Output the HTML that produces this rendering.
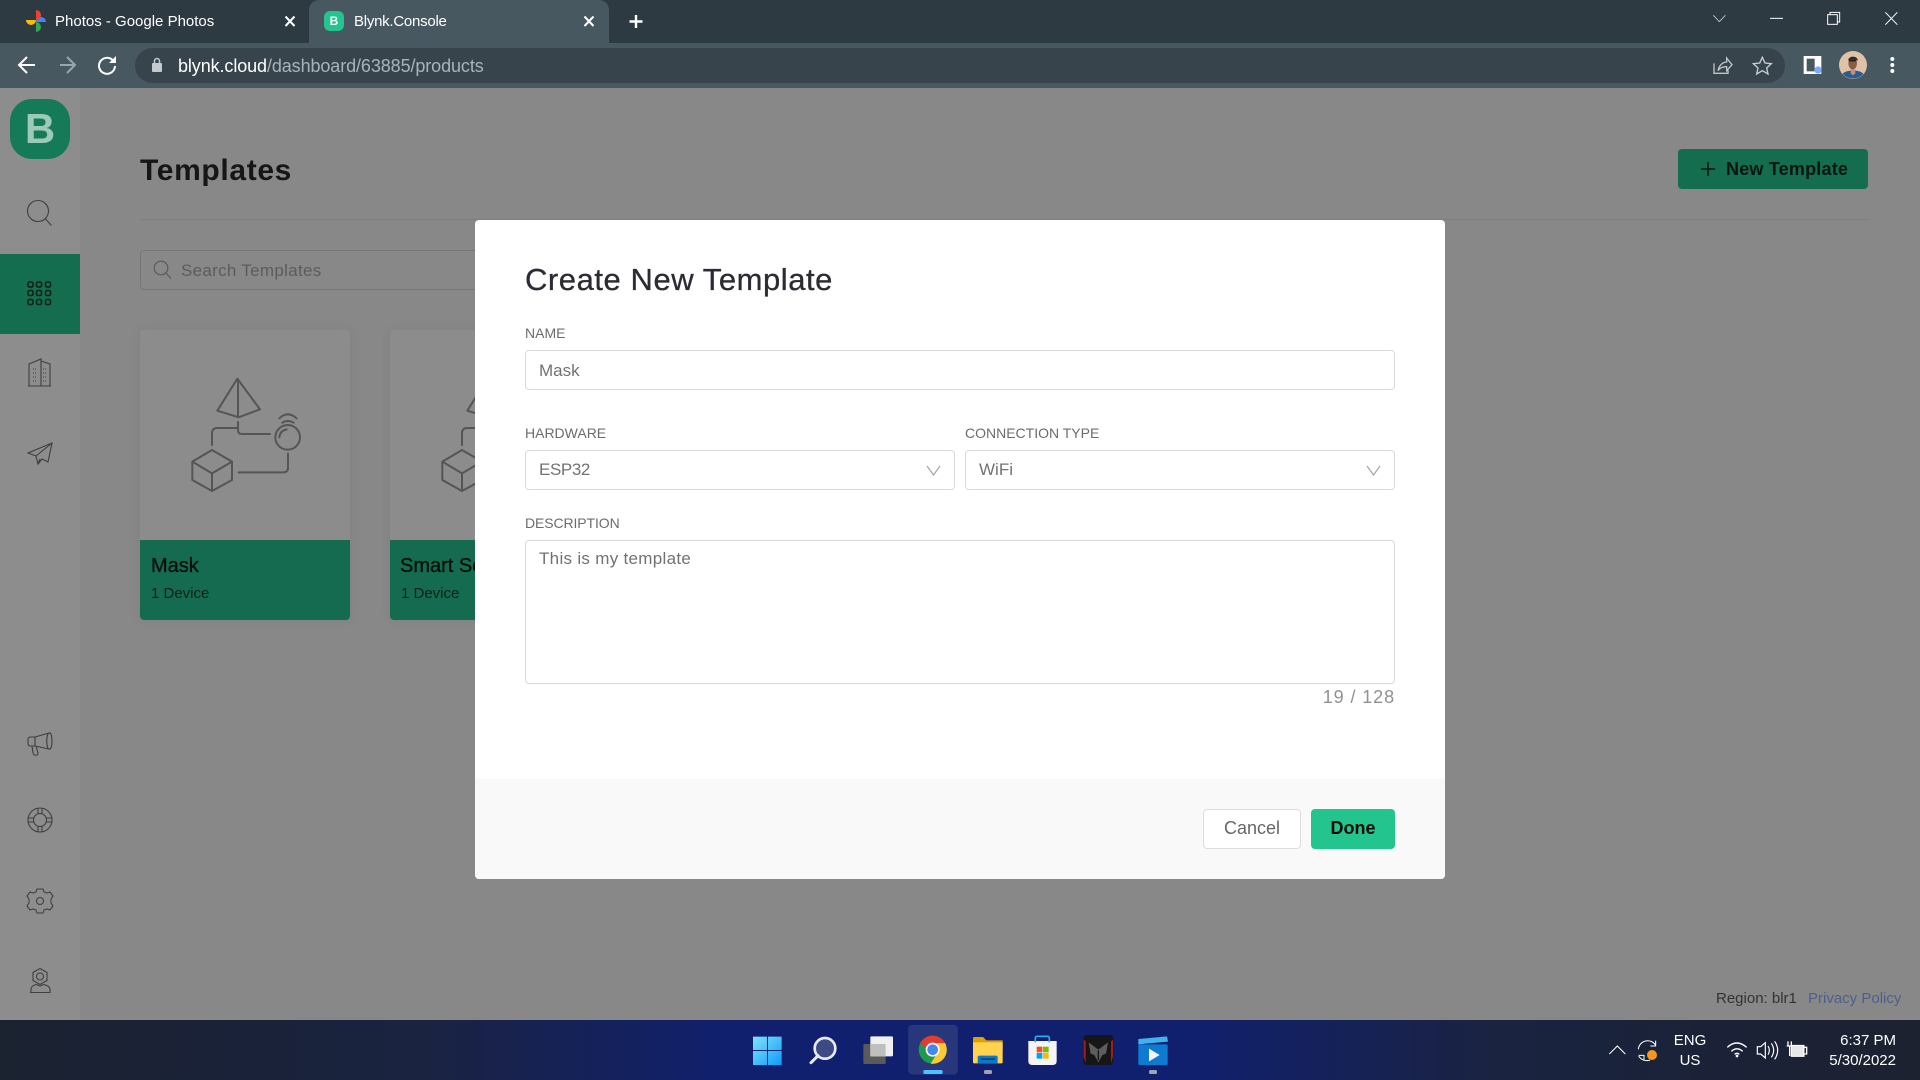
<!DOCTYPE html>
<html><head><meta charset="utf-8"><title>Blynk.Console</title>
<style>
*{box-sizing:border-box}
html,body{margin:0;padding:0;width:1920px;height:1080px;overflow:hidden;background:#888;font-family:"Liberation Sans",sans-serif}
.a{position:absolute;white-space:nowrap}
.lbl{font-size:14px;color:#6c6c6c;line-height:16px}
.inp{position:absolute;background:#fff;border:1px solid #d9d9d9;border-radius:4px}
.val{font-size:17px;color:#727272;line-height:20px}
svg{position:absolute;overflow:visible}
</style></head><body>
<!-- tab strip -->
<div class="a" style="left:0;top:0;width:1920px;height:43px;background:#2e3a42"></div>
<div class="a" style="left:0;top:43px;width:1920px;height:45px;background:#475861"></div>
<div class="a" style="left:309px;top:0;width:300px;height:43px;background:#475861;border-radius:10px 10px 0 0"></div>
<svg style="left:0;top:0" width="700" height="88" viewBox="0 0 700 88">
<path d="M36 22a5 5 0 0 1 10 0z" fill="#4285f4"/>
<path d="M36 20a5 5 0 0 1-10 0z" fill="#fbbc04"/>
<path d="M36 22a5 5 0 0 1 0 10z" fill="#34a853"/>
<path d="M36 20a5 5 0 0 0 0-10z" fill="#ea4335"/>
<path d="M285.500 16.500l9 9.500M294.500 16.500l-9 9.500M584.500 16.500l9 9.500M593.500 16.500l-9 9.500" stroke="#fff" stroke-width="2" fill="none"/>
<path d="M636 15v13M629.500 21.500h13" stroke="#fff" stroke-width="2.400"/>
<rect x="324" y="11" width="20" height="20" rx="6" fill="#23c48e"/>
<path d="M27 57l-8 8 8 8M19 65h16" stroke="#fff" stroke-width="2" fill="none"/>
<path d="M67 57l8 8-8 8M60 65h15" stroke="#9aa6ad" stroke-width="2" fill="none"/>
<g transform="translate(0 4)"><path d="M115 62a8 8 0 1 1-2-5.500" stroke="#fff" stroke-width="2" fill="none"/><path d="M116 52v7h-7z" fill="#fff"/></g>
</svg>
<div class="a" style="left:55px;top:13px;font-size:15px;line-height:18px;color:#fff">Photos - Google Photos</div>
<div class="a" style="left:354px;top:13px;font-size:15px;line-height:18px;color:#fff;letter-spacing:-.25px">Blynk.Console</div>
<div class="a" style="left:324px;top:11px;width:20px;text-align:center;font-size:12px;font-weight:bold;line-height:20px;color:#fff">B</div>
<div class="a" style="left:135px;top:48px;width:1650px;height:35px;background:#37444c;border-radius:18px"></div>
<svg style="left:151px;top:57px" width="12" height="16" viewBox="0 0 12 16"><rect x="1" y="6" width="10" height="9" rx="1" fill="#c4cacd"/><path d="M3.500 6V4a2.500 2.500 0 0 1 5 0v2" stroke="#c4cacd" stroke-width="1.500" fill="none"/></svg>
<div class="a" style="left:178px;top:55px;font-size:18px;line-height:22px;color:#fff;letter-spacing:-.1px">blynk.cloud<span style="color:#a9b3b8">/dashboard/63885/products</span></div>
<svg style="left:1600px;top:0" width="320" height="88" viewBox="0 0 960 264">
<path d="M340 46l18 19 18-19" stroke="#c9cfd2" stroke-width="2.500" fill="none"/>
<path d="M510 55h39" stroke="#fff" stroke-width="3"/>
<rect x="683" y="44" width="29" height="29" stroke="#fff" stroke-width="3" fill="none"/><path d="M690 44v-7h29v29h-7" stroke="#fff" stroke-width="3" fill="none"/>
<path d="M856 37l36 37M892 37l-36 37" stroke="#fff" stroke-width="3"/>
<path d="M342 190v30h42v-10M354 212c4-20 18-26 26-26v-12l16 20-16 18v-12c-10 0-20 2-26 12z" stroke="#bfc5c8" stroke-width="4" fill="none"/>
<path d="M487 172l8 17 19 2-14 13 4 18-17-10-17 10 4-18-14-13 19-2z" stroke="#c8cdd0" stroke-width="4" fill="none"/>
<rect x="611" y="168" width="53" height="54" fill="#fff"/><rect x="620" y="176" width="24" height="38" fill="#475861"/>
<circle cx="654" cy="210" r="11" fill="#7cacf8"/>
<circle cx="759" cy="195" r="42" fill="#e0c2a8"/><path d="M728 222c8-14 54-14 62 0a42 42 0 0 1-62 0z" fill="#2d5c94"/><path d="M752 208h14v12l-7 6-7-6z" fill="#c98f72"/><ellipse cx="758" cy="190" rx="13" ry="18" fill="#8a5c45"/><path d="M744 182c2-16 28-16 30 0l-6-3h-18z" fill="#33261f"/><path d="M747 182h22" stroke="#222" stroke-width="5"/>
<circle cx="877" cy="177" r="6" fill="#fff"/><circle cx="877" cy="195" r="6" fill="#fff"/><circle cx="877" cy="213" r="6" fill="#fff"/>
</svg>
<!-- page -->
<div class="a" style="left:0;top:88px;width:1920px;height:932px;background:#888"></div>
<div class="a" style="left:0;top:88px;width:80px;height:932px;background:#8d8d8d"></div>
<div class="a" style="left:10px;top:99px;width:60px;height:60px;border-radius:22px;background:#147a57;color:#9cc9b8;font-weight:bold;font-size:42px;line-height:60px;text-align:center">B</div>
<div class="a" style="left:0;top:254px;width:80px;height:80px;background:#156d50"></div>
<svg style="left:0;top:88px" width="80" height="932" viewBox="0 0 80 932" fill="none" stroke="#3f3f3f" stroke-width="1.100">
<circle cx="38" cy="123" r="10.500"/><path d="M45.500 131l6 6.500"/>
<g stroke="#0c1f18" stroke-width="1.500"><rect x="28" y="194" width="5" height="5" rx="1.500"/><rect x="36.500" y="194" width="5" height="5" rx="1.500"/><rect x="45.500" y="194" width="5" height="5" rx="1.500"/><rect x="28" y="202.500" width="5" height="5" rx="1.500"/><rect x="36.500" y="202.500" width="5" height="5" rx="1.500"/><rect x="45.500" y="202.500" width="5" height="5" rx="1.500"/><rect x="28" y="211.500" width="5" height="5" rx="1.500"/><rect x="36.500" y="211.500" width="5" height="5" rx="1.500"/><rect x="45.500" y="211.500" width="5" height="5" rx="1.500"/></g>
<path d="M29 298v-22l12-5v27M41 273l9 3v22M28 298h23"/><path d="M33 281h4M33 285h4M33 289h4M33 293h4M43 281h4M43 285h4M43 289h4M43 293h4" stroke-dasharray="1 1"/>
<path d="M52 355l-24 10 8 3 2 8 4-5 6 3zM36 368l16-13M40 371l-2 5"/>
<path d="M30 649h5v9h-5a2.500 2.500 0 0 1-2-2.500v-4a2.500 2.500 0 0 1 2-2.500zM35 649l14-4M35 658l14 3M49 645c4-2 4 18 0 16c-3-1-3-15 0-16zM32 658l1 7c1 3 5 3 5 0l-2-7"/>
<circle cx="40" cy="732" r="12"/><circle cx="40" cy="732" r="6.500"/><path d="M38 720v6M42 720v6M38 738v6M42 738v6M28 730h6M28 734h6M46 730h6M46 734h6"/>
<path d="M37 801h6l1 3 3 1 3-1 3 4-2 3v4l2 3-3 4-3-1-3 1-1 3h-6l-1-3-3-1-3 1-3-4 2-3v-4l-2-3 3-4 3 1 3-1z"/><circle cx="40" cy="813" r="3.500"/>
<path d="M40 880.500l7 4v8l-7 4-7-4v-8z"/><circle cx="40" cy="888.500" r="3.500"/><path d="M31 904.500v-3c0-3 3-5 6-5q3 3 6 0c3 0 7 2 7 5v3zM30 904.500h20"/>
</svg>
<div class="a" style="left:140px;top:151px;font-size:30px;font-weight:bold;line-height:40px;color:#161616;letter-spacing:.65px">Templates</div>
<div class="a" style="left:140px;top:219px;width:1730px;height:1px;background:#7f7f7f"></div>
<div class="a" style="left:1678px;top:149px;width:190px;height:40px;background:#156d50;border-radius:4px"></div>
<svg style="left:1700px;top:161px" width="16" height="16" viewBox="0 0 16 16"><path d="M8 1v14M1 8h14" stroke="#061510" stroke-width="1.500"/></svg>
<div class="a" style="left:1726px;top:157px;font-size:18px;font-weight:bold;line-height:24px;color:#061510;letter-spacing:.2px">New Template</div>
<div class="a" style="left:140px;top:250px;width:400px;height:40px;border:1px solid #767676;border-radius:4px"></div>
<svg style="left:153px;top:260px" width="20" height="20" viewBox="0 0 20 20" fill="none" stroke="#5a5a5a" stroke-width="1.200"><circle cx="8" cy="8" r="6.800"/><path d="M13 13l5 5.500"/></svg>
<div class="a" style="left:181px;top:261px;font-size:17px;line-height:20px;color:#5c5c5c;letter-spacing:.3px">Search Templates</div>
<!-- cards -->
<div class="a" style="left:140px;top:330px;width:210px;height:290px;background:#8c8c8c;border-radius:4px;box-shadow:0 0 12px rgba(0,0,0,.06);overflow:hidden"><div class="a" style="left:0;top:210px;width:210px;height:80px;background:#156b4f"></div></div>
<div class="a" style="left:390px;top:330px;width:210px;height:290px;background:#8c8c8c;border-radius:4px;box-shadow:0 0 12px rgba(0,0,0,.06);overflow:hidden"><div class="a" style="left:0;top:210px;width:210px;height:80px;background:#156b4f"></div></div>
<svg style="left:120px;top:320px" width="360" height="310" viewBox="0 0 1080 930" fill="none" stroke="#555" stroke-width="6" stroke-linecap="round" stroke-linejoin="round">
<g><path d="M352 176L292 272l64 20 64-24zM354 178v112M354 306v24q0 12 12 12h84M276 375v-35q0-16 16-16h62"/><circle cx="503" cy="352" r="37"/><path d="M478 352q2-20 22-24M478 295q25-24 52 0M487 308q16-10 34 0"/><path d="M276 390l60 35v55l-60 33-59-33v-55zM217 425l59 35 60-35M276 460v53M356 457h134q14 0 14-14v-42"/></g>
<g transform="translate(750 0)"><path d="M352 176L292 272l64 20 64-24zM354 178v112M354 306v24q0 12 12 12h84M276 375v-35q0-16 16-16h62"/><path d="M276 390l60 35v55l-60 33-59-33v-55zM217 425l59 35 60-35M276 460v53"/></g>
</svg>
<div class="a" style="left:151px;top:553px;font-size:20px;line-height:26px;color:#050f0b;-webkit-text-stroke:.35px #050f0b">Mask</div>
<div class="a" style="left:151px;top:585px;font-size:15px;line-height:18px;color:#0a1f18">1 Device</div>
<div class="a" style="left:400px;top:553px;font-size:20px;line-height:26px;color:#050f0b;-webkit-text-stroke:.35px #050f0b">Smart Se</div>
<div class="a" style="left:401px;top:585px;font-size:15px;line-height:18px;color:#0a1f18">1 Device</div>
<div class="a" style="left:1716px;top:990px;font-size:15px;line-height:18px;color:#333">Region: blr1</div>
<div class="a" style="left:1808px;top:990px;font-size:15px;line-height:18px;color:#4f5f8c">Privacy Policy</div>
<!-- modal -->
<div class="a" style="left:475px;top:220px;width:970px;height:659px;background:#fff;border-radius:4px;overflow:hidden"><div class="a" style="left:0;top:559px;width:970px;height:100px;background:#f9f9f9"></div></div>
<div class="a" style="left:525px;top:260px;font-size:31px;line-height:40px;color:#2b2c33;letter-spacing:.55px;-webkit-text-stroke:.3px #2b2c33">Create New Template</div>
<div class="a lbl" style="left:525px;top:325px">NAME</div>
<div class="inp" style="left:525px;top:350px;width:870px;height:40px"></div>
<div class="a val" style="left:539px;top:361px">Mask</div>
<div class="a lbl" style="left:525px;top:425px">HARDWARE</div>
<div class="inp" style="left:525px;top:450px;width:430px;height:40px"></div>
<div class="a val" style="left:539px;top:460px;letter-spacing:-.4px">ESP32</div>
<div class="a lbl" style="left:965px;top:425px">CONNECTION TYPE</div>
<div class="inp" style="left:965px;top:450px;width:430px;height:40px"></div>
<div class="a val" style="left:979px;top:460px">WiFi</div>
<svg style="left:0;top:0" width="1920" height="600" fill="none" stroke="#a8a8a8" stroke-width="1.300"><path d="M927 466l6.500 9 6.500-9M1367 466l6.500 9 6.500-9"/></svg>
<div class="a lbl" style="left:525px;top:515px;letter-spacing:-.1px">DESCRIPTION</div>
<div class="inp" style="left:525px;top:540px;width:870px;height:144px"></div>
<div class="a val" style="left:539px;top:549px;letter-spacing:.3px">This is my template</div>
<div class="a" style="left:1295px;width:100px;top:687px;text-align:right;font-size:18px;line-height:20px;color:#919191;letter-spacing:.9px">19 / 128</div>
<div class="a" style="left:1203px;top:809px;width:98px;height:40px;background:#fff;border:1px solid #ddd;border-radius:4px;text-align:center;line-height:37px;font-size:18px;color:#66666a">Cancel</div>
<div class="a" style="left:1311px;top:809px;width:84px;height:40px;background:#23c48e;border-radius:4px;text-align:center;line-height:39px;font-size:18px;font-weight:bold;color:#0b0b0b">Done</div>
<!-- taskbar -->
<div class="a" style="left:0;top:1020px;width:1920px;height:60px;background:linear-gradient(90deg,#1b2230 0%,#1a2340 22%,#10206e 38%,#10206e 62%,#1a2340 78%,#1c2230 100%)"></div>
<svg style="left:730px;top:1015px" width="460" height="65" viewBox="0 0 1380 195">
<defs><linearGradient id="w" x1="0" y1="0" x2="1" y2="1"><stop offset="0" stop-color="#7fe3fb"/><stop offset="1" stop-color="#0e9bfb"/></linearGradient></defs>
<path d="M69 65h42v40H69zM114 65h41v40h-41zM69 108h42v42H69zM114 108h41v42h-41z" fill="url(#w)"/>
<circle cx="285" cy="100" r="31" fill="#3e4a85" stroke="#e8eaf3" stroke-width="8"/><path d="M264 122l-21 21" stroke="#e8eaf3" stroke-width="9" stroke-linecap="round"/>
<rect x="400" y="87" width="67" height="60" rx="4" fill="#5a5a5a"/><rect x="421" y="64" width="68" height="60" rx="4" fill="#f0f0f0"/><rect x="421" y="87" width="46" height="37" fill="#bfbfbf"/>
<rect x="535" y="30" width="148" height="148" rx="12" fill="#fff" fill-opacity=".1" stroke="#fff" stroke-opacity=".08"/>
<circle cx="608" cy="104" r="42" fill="#1e9a4a"/><path d="M571 84a42 42 0 0 1 74 0h-37a20 20 0 0 0-20 14z" fill="#e33b2e"/><path d="M645 84a42 42 0 0 1-43 62l20-32a20 20 0 0 0-4-30z" fill="#fcc934"/><circle cx="608" cy="104" r="21" fill="#fff"/><circle cx="608" cy="104" r="16" fill="#4487f3"/>
<rect x="580" y="165" width="58" height="12" rx="5" fill="#4cc2ff"/>
<path d="M729 70q0-4 4-4h26l10 10h49v30H729z" fill="#e0a100"/><path d="M729 82h89v60q0 3-3 3H732q-3 0-3-3z" fill="#ffd34f"/><path d="M743 145v-18q0-5 5-5h50q5 0 5 5v18z" fill="#0c78c8"/><rect x="752" y="130" width="42" height="5" fill="#083e70"/>
<rect x="762" y="165" width="24" height="12" rx="5" fill="#9ca3b8"/>
<path d="M895 78h85v60q0 12-12 12h-61q-12 0-12-12z" fill="#f5f5f5"/><path d="M916 82V70q0-6 6-6h30q6 0 6 6v12" stroke="#27aef0" stroke-width="5" fill="none"/><rect x="920" y="95" width="17" height="17" fill="#f25022"/><rect x="939" y="95" width="17" height="17" fill="#7fba00"/><rect x="920" y="114" width="17" height="17" fill="#00a4ef"/><rect x="939" y="114" width="17" height="17" fill="#ffb900"/>
<rect x="1060" y="60" width="90" height="90" rx="10" fill="#161616"/><path d="M1061 75v50l6 20V78zM1149 75v50l-6 20V78z" fill="#a81c1c"/><path d="M1076 82l29 22 29-22-6 34-11 4-12 22-12-22-11-4z" fill="#5d5d5d"/><path d="M1105 106v30" stroke="#161616" stroke-width="4"/>
<rect x="1225" y="88" width="88" height="62" rx="4" fill="#0f7bd0"/><path d="M1225 72l86-8 3 16-89 8z" fill="#42b2ee"/><path d="M1257 101l32 19-32 19z" fill="#f2f8fd"/>
<rect x="1257" y="165" width="24" height="12" rx="5" fill="#9ca3b8"/>
</svg>
<svg style="left:1590px;top:970px" width="330" height="110" viewBox="0 0 990 330" fill="none" stroke="#fff" stroke-width="3">
<path d="M58 252l24-24 24 24"/>
<path d="M145 238a28 28 0 0 1 52-12M197 212v16h-16M180 270a28 28 0 0 1-34-12M146 256h16v14"/>
<circle cx="186" cy="255" r="15" fill="#f7971d" stroke="none"/>
<path d="M412 232q28-26 58 0M424 244q17-15 34 0M434 253q7-6 14 0" stroke-width="4"/><circle cx="441" cy="258" r="4" fill="#fff" stroke="none"/>
<path d="M502 230h10l14-12v46l-14-12h-10zM534 228q8 13 0 26M544 220q14 21 0 42M554 214q18 27 0 54" stroke-width="3.500"/>
<path d="M604 226h38v33h-38z" fill="#e8e8e8"/><path d="M642 232h8v20h-8M594 214v12M604 214v12M590 228h18M599 228v30" stroke-width="4"/>
</svg>
<div class="a" style="left:1665px;top:1031px;width:50px;text-align:center;font-size:15px;line-height:20px;color:#fff">ENG<br>US</div>
<div class="a" style="left:1796px;width:100px;top:1031px;text-align:right;font-size:15px;line-height:20px;color:#fff">6:37 PM<br>5/30/2022</div>
</body></html>
